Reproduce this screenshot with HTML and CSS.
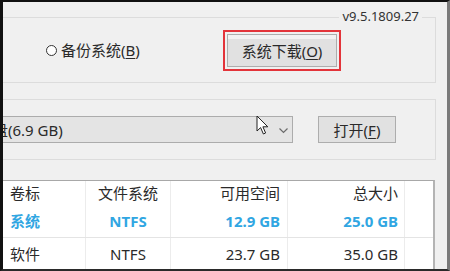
FILE: index.html
```html
<!DOCTYPE html>
<html lang="zh-CN">
<head>
    <meta charset="UTF-8">
    <title>系统备份</title>
    <link rel="stylesheet" href="styles.css">
</head>
<body>
    <div class="window">
        <div class="group group-top">
            <span class="version">v9.5.1809.27</span>
            <label class="radio"><span class="radio-dot"></span><span>备份系统(<u>B</u>)</span></label>
            <div class="highlight">
                <button class="btn btn-download">系统下载(<u>O</u>)</button>
            </div>
        </div>

        <div class="group group-drive">
            <div class="combo">
                <span class="combo-text">盘(6.9 GB)</span>
                <svg class="chevron" width="9" height="6" viewBox="0 0 9 6"><polyline points="0.5,0.5 4.5,4.5 8.5,0.5" fill="none" stroke="#6b6b6b" stroke-width="1.2"/></svg>
            </div>
            <button class="btn btn-open">打开(<u>F</u>)</button>
            <!-- mouse pointer over the combo -->
            <svg class="pointer" width="14" height="21" viewBox="0 0 14 21"><path d="M1 1 L1 16 L4.6 12.6 L7.4 19 L9.6 18 L6.9 11.8 L11.8 11.8 Z" fill="#fff" stroke="#222" stroke-width="1" stroke-linejoin="round"/></svg>
        </div>

        <div class="table-wrap">
            <div class="row row-head">
                <div class="cell c1">卷标</div>
                <div class="cell c2">文件系统</div>
                <div class="cell c3">可用空间</div>
                <div class="cell c4">总大小</div>
                <div class="cell c5"></div>
            </div>
            <div class="row row-active">
                <div class="cell c1">系统</div>
                <div class="cell c2">NTFS</div>
                <div class="cell c3">12.9 GB</div>
                <div class="cell c4">25.0 GB</div>
                <div class="cell c5"></div>
            </div>
            <div class="row row-last">
                <div class="cell c1">软件</div>
                <div class="cell c2">NTFS</div>
                <div class="cell c3">23.7 GB</div>
                <div class="cell c4">35.0 GB</div>
                <div class="cell c5"></div>
            </div>
        </div>
    </div>
</body>
</html>
```

FILE: styles.css
```css
body {
    margin: 0;
    padding: 0;
    font-family: "Noto Sans", "Noto Sans CJK SC", sans-serif;
    color: #2a2a2a;
    background-color: #f0f0f0;
}
.window {
    height: 271px;
    box-sizing: border-box;
    border-top: 2px solid #111;
    border-left: 3px solid #111;
    border-right: 3px solid #7a7a7a;
    border-bottom: 2px solid #2a2a2a;
    background-color: #f0f0f0;
    display: flex;
    flex-direction: column;
    overflow: hidden;
}
.group {
    position: relative;
    box-sizing: border-box;
    border: 1px solid #dcdcdc;
    border-left: none;
    margin-right: 11px;
    display: flex;
    align-items: center;
    flex-shrink: 0;
}
.group-top {
    margin-top: 15px;
    height: 66px;
    padding-left: 43px;
}
.group-drive {
    margin-top: 16px;
    height: 61px;
}
.version {
    position: absolute;
    top: -10px;
    right: 13px;
    padding: 0 3px;
    font-size: 13px;
    line-height: 17px;
    color: #333;
    background-color: #f0f0f0;
}
.radio {
    width: 177px;
    display: flex;
    align-items: center;
    gap: 4px;
    font-size: 15px;
    line-height: 20px;
}
.radio-dot {
    width: 9px;
    height: 9px;
    border: 1px solid #333;
    border-radius: 50%;
    background-color: #fff;
}
.highlight {
    border: 2px solid #e3343a;
    padding: 2px;
    display: flex;
}
.btn {
    font-family: inherit;
    font-size: 15px;
    line-height: 20px;
    color: #2a2a2a;
    padding: 0;
    border: 1px solid #adadad;
    background: linear-gradient(#f2f2f2 0 4px, #e1e1e1 4px);
}
.btn u,
.radio u {
    text-underline-offset: 2px;
}
.btn-download {
    width: 110px;
    height: 33px;
    padding-top: 2px;
}
.combo {
    width: 290px;
    height: 27px;
    box-sizing: border-box;
    border: 1px solid #acacac;
    border-left: none;
    background-color: #e4e4e4;
    display: flex;
    align-items: center;
    overflow: hidden;
}
.combo-text {
    margin-left: -10px;
    font-size: 15px;
    line-height: 20px;
    white-space: nowrap;
}
.chevron {
    margin-left: auto;
    margin-right: 4px;
    margin-top: 3px;
}
.btn-open {
    margin-left: 25px;
    width: 78px;
    height: 27px;
    background: #e1e1e1;
}
.pointer {
    position: absolute;
    left: 253px;
    top: 15px;
}
.table-wrap {
    margin-top: 20px;
    margin-right: 12px;
    flex: 1;
    background-color: #fff;
    border-top: 1px solid #a8a8a8;
    border-right: 2px solid #b4b4b4;
    display: flex;
    flex-direction: column;
    font-size: 15px;
    line-height: 20px;
}
.row {
    display: grid;
    grid-template-columns: 83px 85px 117px 117px 1fr;
}
.row-head {
    height: 24px;
}
.row-active {
    height: 32px;
    border-bottom: 1px solid #e4e4e4;
    color: #30a6e2;
    font-weight: 700;
}
.row-last {
    flex: 1;
}
.cell {
    display: flex;
    align-items: center;
    border-right: 1px solid #ececec;
    white-space: nowrap;
}
.c1 {
    padding-left: 7px;
}
.c2 {
    justify-content: center;
}
.c3 {
    justify-content: flex-end;
    padding-right: 7px;
}
.c4 {
    justify-content: flex-end;
    padding-right: 6px;
}
.c5 {
    border-right: none;
}
```
